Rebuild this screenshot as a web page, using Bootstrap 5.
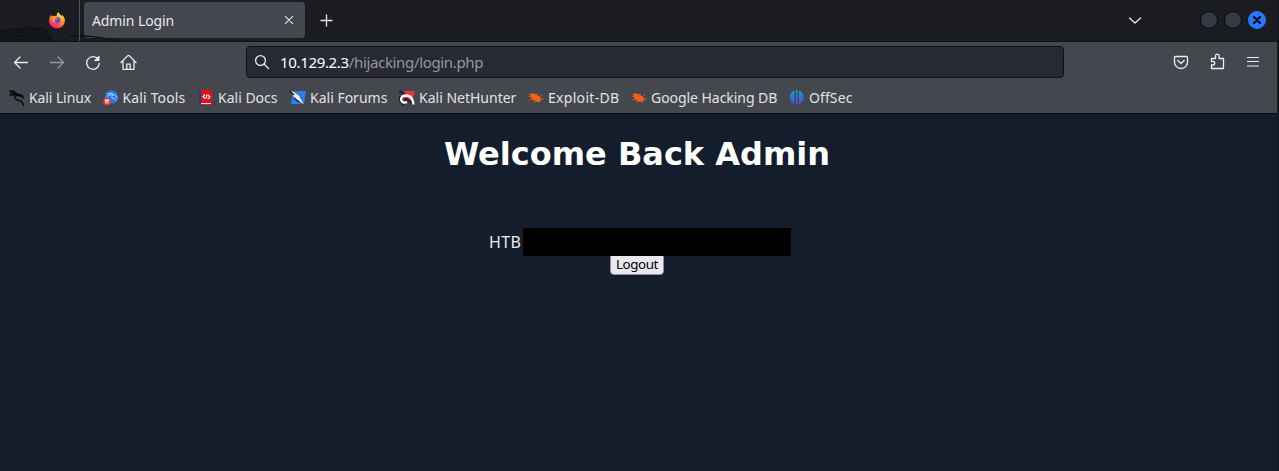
<!DOCTYPE html>
<html lang="en">
<head>
<meta charset="utf-8">
<title>Admin Login</title>
<link href="https://cdn.jsdelivr.net/npm/bootstrap@5.3.0/dist/css/bootstrap.min.css" rel="stylesheet">
<style>
body{height:471px;background:#141d2b;color:#fff;font-family:"Noto Sans",sans-serif;font-size:14px;line-height:20px;border-right:2px solid #15171d}
svg{display:block;flex:none}
.ln{fill:none;stroke:#ececee;stroke-width:1.3;stroke-linecap:round;stroke-linejoin:round}
.tabs-bar{height:42px;background:#1b1c21;border-bottom:1px solid #101115;position:relative}
.dragon-art{position:absolute;left:0;top:0}
.pinned{width:80px;height:41px;border-right:1px solid #54555b;padding-left:48px;position:relative}
.page-tab{width:221px;height:36px;margin:0 0 1px 4px;background:#45474e;border-radius:4px;padding:0 10px 0 8px;color:#e6e6e8;letter-spacing:-.1px}
.tab-title{padding-top:2px}
.win-btn{width:18px;height:18px;border-radius:50%;background:#343945;border:1px solid #090a0d}
.win-btn.close-win{background:#2777ff;border-color:#2777ff}
.tools-bar{height:41px;background:#45474e;padding-bottom:2px}
.address{width:818px;height:32px;background:#272935;border:1px solid #101117;border-radius:4px;padding-left:7px;font-size:15px;letter-spacing:-.34px;color:#96979d}
.marks-bar{height:31px;background:#45474e;border-bottom:1px solid #0b0c10;padding-left:9px;color:#e2e2e4}
.bm{gap:4px;white-space:nowrap}
.heading{font:bold 32px/38px "DejaVu Sans",sans-serif;margin:21px 3px 0 0}
.flag{margin:55px 0 0 489px;height:28px;font-size:16px;position:relative;z-index:1}
.flag-label{width:34px;letter-spacing:.4px;color:#ececee}
.redacted{width:268px;height:28px;background:#000}
.logout{display:block;width:54px;height:22px;margin:-3px 0 0 610px;padding:0;border:1px solid #8f8f9d;border-radius:4px;background:#e9e9ed;color:#000;font-size:13.33px;letter-spacing:-.4px;line-height:19px}
</style>
</head>
<body class="overflow-hidden">
<header>
<div class="tabs-bar d-flex align-items-center">
 <svg class="dragon-art" width="130" height="41"><path d="M0 31Q20 27 45 29L52 41H0Z" fill="#15161a"/><path d="M0 31Q20 27 45 29L52 41M0 37L40 35L45 41M70 36Q90 35 118 41" fill="none" stroke="#111216" stroke-width="1.5"/></svg>
 <div class="pinned d-flex align-items-center flex-shrink-0">
  <svg width="18" height="18" viewBox="0 0 18 18"><defs><linearGradient id="fx" x1=".8" y1="0" x2=".25" y2="1"><stop offset="0" stop-color="#fff04b"/><stop offset=".45" stop-color="#ff9b22"/><stop offset=".75" stop-color="#ff4050"/><stop offset="1" stop-color="#f0207c"/></linearGradient></defs><path d="M10 0Q11.500 1 12 2.500Q13.400 3 13.800 4.200L14.300 3Q17.300 6 16.800 9.500C16.300 13.700 13 16.300 9 16.300C4.500 16.300 1 13 1 8.500Q1.200 5 3.200 2.500L3.700 4.500Q5 3.500 6.400 3.700Q7.500 4 8.500 4Q8.500 1.800 10 0Z" fill="url(#fx)"/><circle cx="9" cy="8.300" r="3.300" fill="#7541df"/><path d="M4 5.200Q6 4 7.500 5.600L9.800 6.200Q8.500 7.500 7 7.500Q5.500 10 8.500 10.500Q6 11.500 4.500 9Z" fill="#ff9a25"/></svg>
 </div>
 <div class="page-tab d-flex align-items-center justify-content-between flex-shrink-0"><span class="tab-title">Admin Login</span>
  <svg class="ln" width="12" height="12" viewBox="0 0 12 12"><path d="M2.300 2.300L9.700 9.700M9.700 2.300L2.300 9.700" stroke-width="1.100"/></svg></div>
 <svg class="ln" style="margin-left:15px" width="13" height="13"><path d="M6.500 1V12M1 6.500H12"/></svg>
 <svg class="ln ms-auto" style="margin-right:58px" width="14" height="10"><path d="M1.500 2L7 7L12.500 2"/></svg>
 <div class="d-flex" style="gap:6px;margin:0 11px 1px 0"><i class="win-btn"></i><i class="win-btn"></i><i class="win-btn close-win"><svg width="16" height="16"><path d="M5 5L11 11M11 5L5 11" stroke="#07101e" stroke-width="2.400" stroke-linecap="round"/></svg></i></div>
</div>
<div class="tools-bar d-flex align-items-center">
 <svg class="ln" style="margin-left:13px" width="16" height="16"><path d="M14.500 8.500H1.500M7 3L1.500 8.500L7 14"/></svg>
 <svg class="ln opacity-50" style="margin-left:20px" width="16" height="16"><path d="M1.500 8.500H14.500M9 3L14.500 8.500L9 14"/></svg>
 <svg class="ln" style="margin-left:20px" width="16" height="16"><path d="M13.300 5.500A6.300 6.300 0 1 0 14.300 9.500"/><path d="M14 2.500V6.500H10Z" fill="#ececee" stroke-width="1"/></svg>
 <svg class="ln" style="margin-left:19px" width="18" height="16"><path d="M1 8.500L7.500 1.900Q8.500 1 9.500 1.900L16 8.500M3 7.500V15.300H14V7.500M6.800 15V10.200H10.200V15"/></svg>
 <div class="address d-flex align-items-center" style="margin-left:108px"><svg class="ln" width="16" height="16"><circle cx="6.500" cy="6.500" r="4.900"/><path d="M10 10L14.500 14.500"/></svg><span style="margin-left:10px"><span class="text-white">10.129.2.3</span>/hijacking/login.php</span></div>
 <svg class="ln ms-auto" style="margin-right:20px" width="16" height="16"><path d="M2.500 2.500H13.500Q14.500 2.500 14.500 3.500V8A6.500 6.500 0 0 1 1.500 8V3.500Q1.500 2.500 2.500 2.500ZM4.800 6.500L8 9.500L11.200 6.500"/></svg>
 <svg class="ln" style="margin-right:20px" width="17" height="17"><path d="M2.500 5.500H6.500V3A1.800 1.800 0 0 1 10.100 3V5.500H14.500V15.500H2.500V12H4A1.700 1.700 0 0 0 4 8.500H2.500Z"/></svg>
 <svg class="ln" style="margin-right:17px" width="14" height="14"><path d="M1.500 2.500H12.500M1.500 6.500H12.500M1.500 11H12.500" stroke-width="1.200"/></svg>
</div>
<nav class="marks-bar d-flex align-items-center">
 <div class="bm d-flex align-items-center" style="width:93.500px"><svg width="16" height="16"><path d="M0 .5L5 1.500L8 4L12 5Q14 6 14.500 8.500M1 2.800L5 3L8 4.500M.5 5.500L4 4.500L8 5Q5.500 6 6 8Q7 10.300 12 11L15 15.500" fill="none" stroke="#08090b" stroke-width="1.400"/><path d="M8 4L12 5L14 8L11 6.500L8 6Z"/></svg><span style="letter-spacing:-.1px">Kali Linux</span></div>
 <div class="bm d-flex align-items-center" style="width:95.500px"><svg width="16" height="16"><circle cx="8.500" cy="7" r="6.800" fill="#2877f0"/><path d="M4 4Q8 2 12 5L14 8M4 6.500Q7 4 10 5Q7.500 7 9.500 8.300Q12 8.500 13 10.500" fill="none" stroke="#dceaff" stroke-width=".8"/><circle cx="4" cy="11.500" r="3.800" fill="#e9383e"/><path d="M1.800 10H6.200M3 10V13.500M5 10V13.500" stroke="#fff"/></svg><span style="letter-spacing:.15px">Kali Tools</span></div>
 <div class="bm d-flex align-items-center" style="width:92px"><svg width="16" height="16"><path d="M1 1H4V15.500H1Z" fill="#203f78"/><path d="M3 0H14V13H3Z" fill="#dd1117"/><path d="M3 13H13V14.500H3Z" fill="#e3dfe0"/><path d="M3 15H14" stroke="#a30c12" stroke-width="1.200"/><path d="M7 4.500L5 6.500L7 8.500M10 5L12 7L10 9M9 4.500L8 8.700" fill="none" stroke="#fff" stroke-width="1.200"/></svg><span>Kali Docs</span></div>
 <div class="bm d-flex align-items-center" style="width:109px"><svg width="16" height="16"><path d="M3 1H16L14 14H1Z" fill="#2580f5"/><path d="M0 0L4 1.500L9 5L12 10L15.500 15.500L10 12L5 9L2 5Z" fill="#f3f3f3" stroke="#17191d" stroke-width=".6"/><path d="M0 1L4 5M4 8L9 12" stroke="#17191d" stroke-width="1.500"/></svg><span>Kali Forums</span></div>
 <div class="bm d-flex align-items-center" style="width:129px"><svg width="16" height="16"><path d="M4 1H16L13 11L5 8Z" fill="#f0343e"/><path d="M0 1L6 4M1 6L1 11L5 15" stroke="#17191d" stroke-width="2" fill="none"/><path d="M14.500 14.500Q14 6.500 8 5.500Q2 5.500 2 9.500Q3 14 8 12" fill="none" stroke="#fff" stroke-width="2.300"/><path d="M5 9.500Q8 7.500 12 13" fill="none" stroke="#202127" stroke-width="1.800"/></svg><span>Kali NetHunter</span></div>
 <div class="bm d-flex align-items-center" style="width:103px"><svg width="16" height="16"><g id="bug"><path d="M2 4Q3 2.500 7 4L11 6L13.500 9L12 12L7 11.500L3 8Z" fill="#f26413"/><path d="M0 6L4 7M1 10L5 9M5 12.500L8 10M8 5L10 3.500M11 7L14 5M12 9L16 9" stroke="#c95e25" stroke-width=".9"/></g></svg><span style="letter-spacing:.3px">Exploit-DB</span></div>
 <div class="bm d-flex align-items-center" style="width:158px"><svg width="16" height="16"><use href="#bug"/></svg><span style="letter-spacing:-.05px">Google Hacking DB</span></div>
 <div class="bm d-flex align-items-center"><svg width="16" height="16"><defs><linearGradient id="os" x2="0" y2="1"><stop stop-color="#05a9c8"/><stop offset="1" stop-color="#6538ee"/></linearGradient></defs><path d="M5.500 .5V14A7.300 7.300 0 0 1 5.500 .5ZM10 .5V14A7.300 7.300 0 0 0 10 .5ZM7 0H8.600V15.500L7 14.500Z" fill="url(#os)"/></svg><span style="letter-spacing:.1px">OffSec</span></div>
</nav>
</header>
<main>
<h1 class="heading text-center">Welcome Back Admin</h1>
<div class="flag d-flex align-items-center"><span class="flag-label">HTB</span><div class="redacted"></div></div>
<button class="logout" type="button">Logout</button>
</main>
<script src="https://cdn.jsdelivr.net/npm/bootstrap@5.3.0/dist/js/bootstrap.bundle.min.js"></script>
</body>
</html>
